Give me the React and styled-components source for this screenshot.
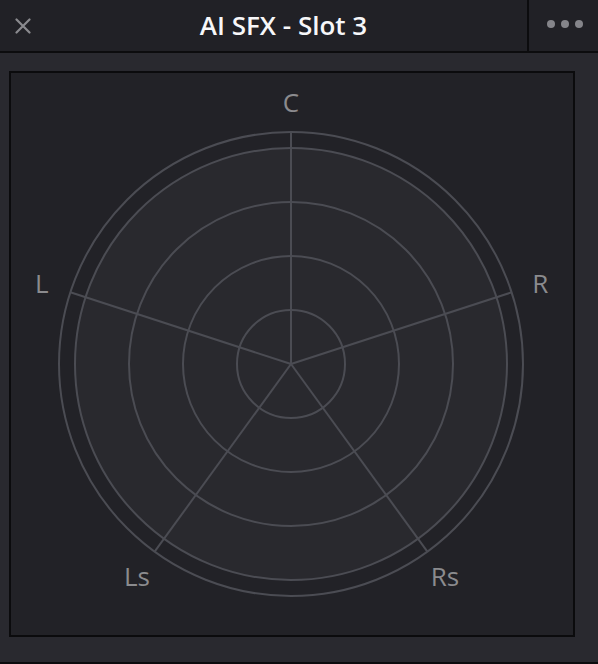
import React from "react";
import styled, { createGlobalStyle } from "styled-components";

const GlobalStyle = createGlobalStyle`
  html, body {
    margin: 0;
    padding: 0;
    background: #29292f;
  }
  body {
    font-family: "Open Sans", "Noto Sans", "Liberation Sans", sans-serif;
    -webkit-font-smoothing: antialiased;
  }
`;

const Window = styled.div`
  width: 598px;
  height: 664px;
  display: flex;
  flex-direction: column;
  background: #29292f;
  overflow: hidden;
`;

const Header = styled.header`
  height: 51px;
  flex: none;
  display: flex;
  align-items: stretch;
  background: #212126;
  border-bottom: 2px solid #0c0c0e;
`;

const CloseButton = styled.button`
  width: 40px;
  flex: none;
  display: flex;
  align-items: center;
  justify-content: flex-start;
  padding: 0 0 0 15px;
  margin: 0;
  border: none;
  background: transparent;
  color: #8a8a8e;
  cursor: pointer;
`;

const Title = styled.h1`
  flex: 1;
  margin: 0;
  display: flex;
  align-items: center;
  justify-content: center;
  font-size: 26px;
  font-weight: 600;
  color: #f7f7f9;
  letter-spacing: 0;
  padding-bottom: 1px;
`;

const MenuButton = styled.button`
  width: 71px;
  flex: none;
  display: flex;
  align-items: center;
  justify-content: center;
  gap: 6px;
  padding: 0 0 4px 2px;
  margin: 0;
  border: none;
  border-left: 2px solid #0c0c0e;
  background: transparent;
  cursor: pointer;
`;

const Dot = styled.span`
  width: 8px;
  height: 8px;
  border-radius: 50%;
  background: #85858a;
`;

const Body = styled.main`
  flex: 1;
  display: flex;
  align-items: flex-start;
  padding: 18px 23px 0 9px;
  border-bottom: 2px solid #0c0c0e;
`;

const Panel = styled.section`
  width: 562px;
  height: 562px;
  flex: none;
  border: 2px solid #0b0b0d;
  background: #222227;
`;

const Chart = styled.svg`
  display: block;
  width: 562px;
  height: 562px;
`;

const ChannelLabel = styled.text`
  font-family: "Open Sans", "Noto Sans", "Liberation Sans", sans-serif;
  font-size: 26px;
  fill: #8b8b8e;
`;

const CX = 280;
const CY = 291;
const RINGS = [54, 108, 162, 216];
const OUTER = 232;
const LABEL_R = 262;
const STROKE = "#4b4c53";

const channels = [
  { name: "C", angle: 0 },
  { name: "R", angle: 72 },
  { name: "Rs", angle: 144 },
  { name: "Ls", angle: 216 },
  { name: "L", angle: 288 },
];

const polar = (r, deg) => {
  const a = (deg * Math.PI) / 180;
  return [CX + r * Math.sin(a), CY - r * Math.cos(a)];
};

function SurroundField() {
  return (
    <Chart viewBox="0 0 562 562">
      <circle cx={CX} cy={CY} r={RINGS[3]} fill="#29292e" />
      <circle cx={CX} cy={CY} r={OUTER} fill="none" stroke={STROKE} strokeWidth="2" />
      {RINGS.map((r) => (
        <circle key={r} cx={CX} cy={CY} r={r} fill="none" stroke={STROKE} strokeWidth="2" />
      ))}
      {channels.map(({ name, angle }) => {
        const [x, y] = polar(OUTER, angle);
        return (
          <line key={name} x1={CX} y1={CY} x2={x} y2={y} stroke={STROKE} strokeWidth="2" />
        );
      })}
      {channels.map(({ name, angle }) => {
        const [x, y] = polar(LABEL_R, angle);
        return (
          <ChannelLabel
            key={name}
            x={x}
            y={y}
            textAnchor="middle"
            dominantBaseline="central"
          >
            {name}
          </ChannelLabel>
        );
      })}
    </Chart>
  );
}

export default function App() {
  return (
    <>
      <GlobalStyle />
      <Window>
        <Header>
          <CloseButton aria-label="Close">
            <svg width="16" height="16" viewBox="0 0 16 16">
              <path
                d="M1.5 1.5 L14.5 14.5 M14.5 1.5 L1.5 14.5"
                stroke="currentColor"
                strokeWidth="2.2"
                strokeLinecap="round"
              />
            </svg>
          </CloseButton>
          <Title>AI SFX - Slot 3</Title>
          <MenuButton aria-label="More">
            <Dot />
            <Dot />
            <Dot />
          </MenuButton>
        </Header>
        <Body>
          <Panel>
            <SurroundField />
          </Panel>
        </Body>
      </Window>
    </>
  );
}
